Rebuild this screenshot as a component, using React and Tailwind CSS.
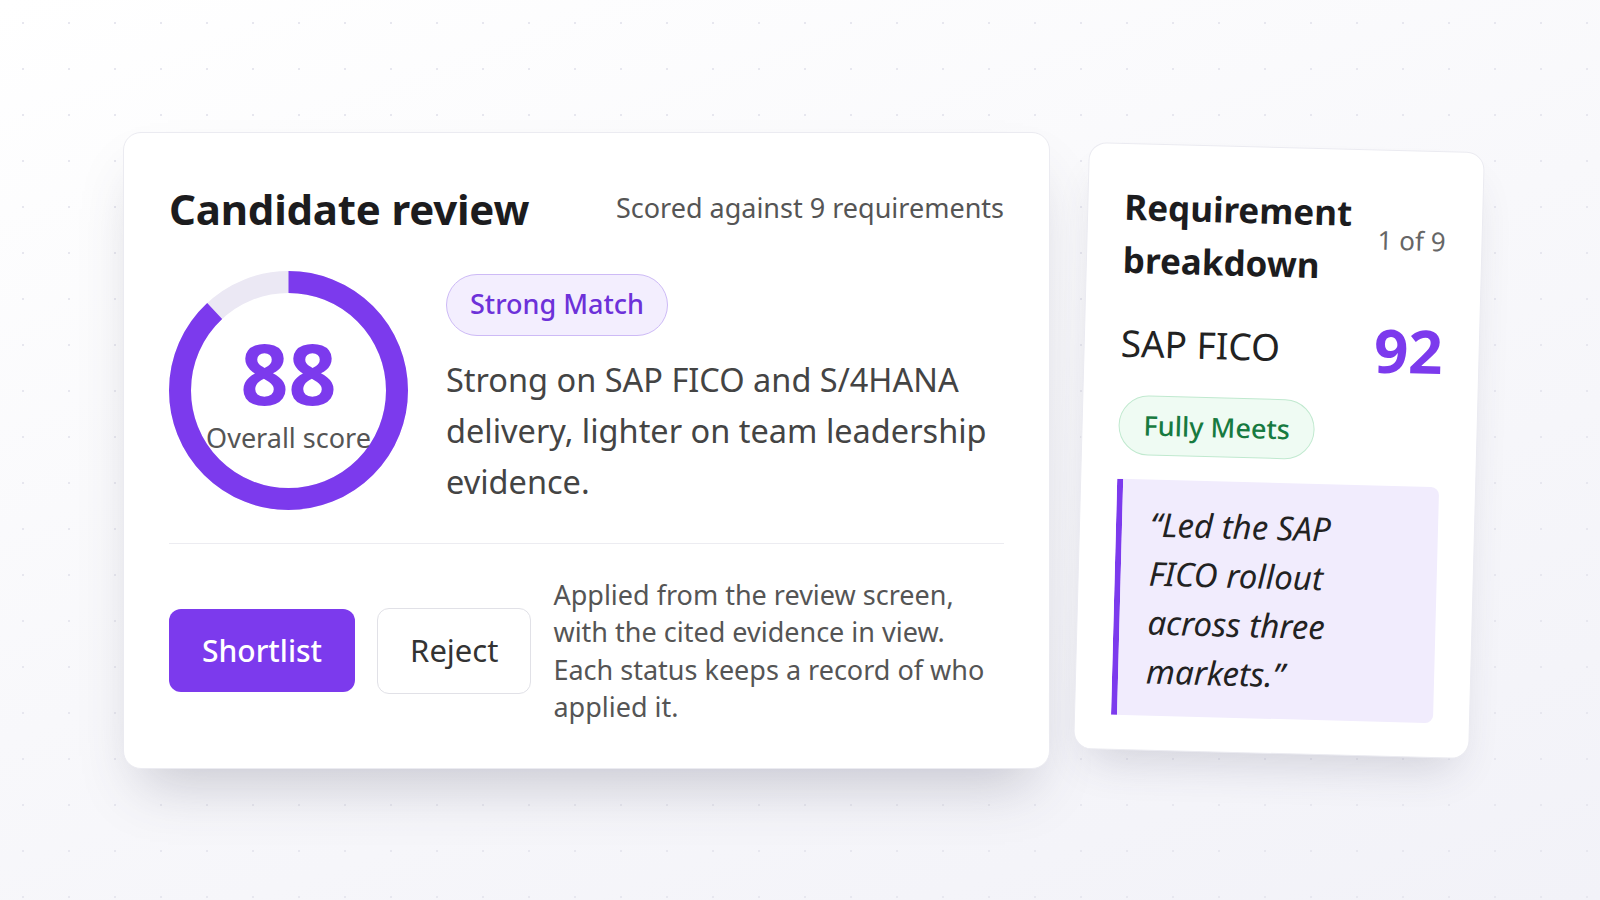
import React from "react";

const ScoreRing = ({ score }) => {
  const size = 239;
  const stroke = 22;
  const r = (size - stroke) / 2;
  const c = 2 * Math.PI * r;

  return (
    <div className="relative w-[239px] h-[239px] shrink-0">
      <svg width={size} height={size} className="-rotate-90">
        <circle cx={size / 2} cy={size / 2} r={r} fill="none" stroke="#ebe8f4" strokeWidth={stroke} />
        <circle
          cx={size / 2}
          cy={size / 2}
          r={r}
          fill="none"
          stroke="#7c3aed"
          strokeWidth={stroke}
          strokeDasharray={`${(c * score) / 100} ${c}`}
        />
      </svg>
      <div className="absolute inset-0 flex flex-col items-center justify-center">
        <span className="text-[84px] leading-none font-bold text-[#7c3aed] mt-[6px]">{score}</span>
        <span className="text-[27px] leading-tight text-[#555] mt-[6px] whitespace-nowrap">Overall score</span>
      </div>
    </div>
  );
};

export default function App() {
  return (
    <div className="min-h-screen w-full flex items-center justify-center font-['Noto_Sans',sans-serif] bg-[radial-gradient(#e7e7ef_1px,transparent_1.5px),linear-gradient(160deg,#ffffff_0%,#f8f8fb_50%,#f2f2f8_100%)] bg-[length:46px_46px,100%_100%]">
      <div className="flex items-center gap-[31px]">
        {/* ====== CANDIDATE REVIEW ====== */}
        <section className="w-[927px] h-[637px] rounded-[18px] bg-white border border-[#ebebf1] shadow-[0_32px_54px_-18px_rgba(60,60,90,0.26)] px-[45px] pt-[49px] flex flex-col">
          <div className="flex items-center justify-between">
            <h1 className="text-[42px] leading-[53px] font-bold text-[#1c1c1e] tracking-[-0.2px]">Candidate review</h1>
            <span className="text-[27px] text-[#555]">Scored against 9 requirements</span>
          </div>

          <div className="mt-[36px] flex items-center gap-[38px]">
            <ScoreRing score={88} />
            <div className="flex flex-col items-start">
              <span className="rounded-full border-[1.5px] border-[#cdbaf6] bg-[#f3eefe] px-[23px] h-[62px] flex items-center text-[27px] font-medium text-[#6d31d9]">
                Strong Match
              </span>
              <p className="mt-[18px] text-[32.5px] leading-[51px] text-[#444]">
                Strong on SAP FICO and S/4HANA delivery, lighter on team leadership evidence.
              </p>
            </div>
          </div>

          <div className="mt-[33px] h-px bg-[#ececf1]" />

          <div className="mt-[32px] flex items-center">
            <button className="h-[83px] px-[33px] rounded-[12px] bg-[#7c3aed] text-white text-[30px] font-medium">
              Shortlist
            </button>
            <button className="ml-[22px] h-[86px] px-[32px] rounded-[12px] bg-white border border-[#e1e1e7] text-[#333] text-[31px]">
              Reject
            </button>
            <p className="ml-[22px] w-[435px] text-[27px] leading-[37.5px] text-[#555]">
              Applied from the review screen, with the cited evidence in view. Each status keeps a record of who
              applied it.
            </p>
          </div>
        </section>

        {/* ====== REQUIREMENT BREAKDOWN ====== */}
        <aside className="w-[396px] h-[607px] rotate-[1.5deg] rounded-[18px] bg-white border border-[#ebebf1] shadow-[0_24px_44px_-16px_rgba(60,60,90,0.2)] px-[36px] pt-[36px] flex flex-col">
          <div className="flex items-center justify-between gap-4">
            <h2 className="text-[35px] leading-[53px] font-bold text-[#1c1c1e] w-[240px]">Requirement breakdown</h2>
            <span className="text-[26px] text-[#666] whitespace-nowrap">1 of 9</span>
          </div>

          <div className="mt-[27px] h-[60px] flex items-center justify-between">
            <span className="text-[37px] text-[#222]">SAP FICO</span>
            <span className="text-[60px] leading-none font-bold text-[#7c3aed]">92</span>
          </div>

          <span className="mt-[22px] self-start rounded-full border-[1.5px] border-[#c0e9cf] bg-[#effbf3] px-[24px] h-[60px] flex items-center text-[27px] font-medium text-[#177a40]">
            Fully Meets
          </span>

          <blockquote className="mt-[24px] h-[236px] border-l-[6px] border-[#7c3aed] bg-[#f1ecfd] rounded-r-[8px] pl-[28px] pt-[20px] text-[33px] leading-[49px] italic text-[#222]">
            <p className="w-[230px]">“Led the SAP FICO rollout across three markets.”</p>
          </blockquote>
        </aside>
      </div>
    </div>
  );
}
